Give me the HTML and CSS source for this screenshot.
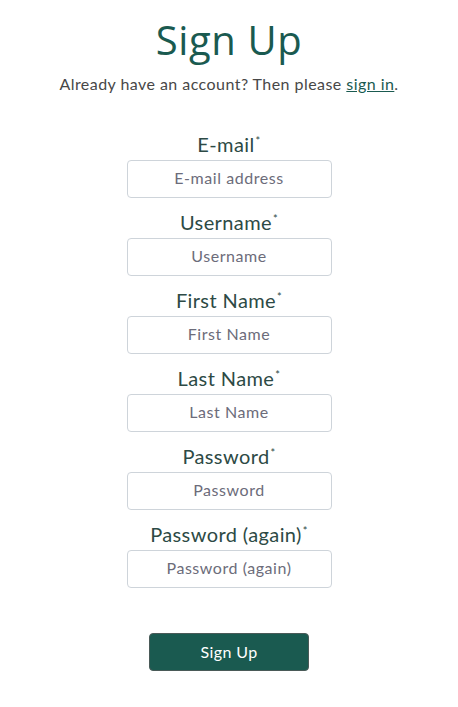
FILE: index.html
```html
<!DOCTYPE html>
<html>
<head>
<meta charset="utf-8">
<link rel="stylesheet" href="styles.css">
</head>
<body>
<main class="page">
  <h1 class="title">Sign Up</h1>
  <p class="sub">Already have an account? Then please <a href="#" class="link">sign in</a>.</p>
  <form class="form">
    <div class="field">
      <label class="label">E-mail<sup class="req">*</sup></label>
      <input class="input" type="email" placeholder="E-mail address">
    </div>
    <div class="field">
      <label class="label">Username<sup class="req">*</sup></label>
      <input class="input" type="text" placeholder="Username">
    </div>
    <div class="field">
      <label class="label">First Name<sup class="req">*</sup></label>
      <input class="input" type="text" placeholder="First Name">
    </div>
    <div class="field">
      <label class="label">Last Name<sup class="req">*</sup></label>
      <input class="input" type="text" placeholder="Last Name">
    </div>
    <div class="field">
      <label class="label">Password<sup class="req">*</sup></label>
      <input class="input" type="password" placeholder="Password">
    </div>
    <div class="field">
      <label class="label">Password (again)<sup class="req">*</sup></label>
      <input class="input" type="password" placeholder="Password (again)">
    </div>
    <button class="btn" type="button">Sign Up</button>
  </form>
</main>
</body>
</html>
```
FILE: styles.css
```css
html, body {
  margin: 0;
  padding: 0;
  background: #fff;
}
body {
  font-family: Lato, "Open Sans", sans-serif;
}
.page {
  display: flex;
  flex-direction: column;
  align-items: center;
  padding-top: 15px;
}
.title {
  margin: 0;
  font-family: "Open Sans", Lato, sans-serif;
  font-weight: 400;
  font-size: 40px;
  line-height: 50px;
  letter-spacing: 0.6px;
  color: #1a5a50;
}
.sub {
  margin: 8px 0 0;
  font-size: 16px;
  line-height: 22px;
  letter-spacing: 0.45px;
  color: #474747;
}
.link {
  color: #1a5a50;
  text-decoration: underline;
}
.form {
  margin-top: 38px;
  display: flex;
  flex-direction: column;
  align-items: center;
  gap: 13px;
}
.field {
  display: flex;
  flex-direction: column;
  align-items: center;
  gap: 5px;
}
.label {
  font-size: 20px;
  line-height: 22px;
  letter-spacing: 0.4px;
  color: #2d4a45;
}
.req {
  font-size: 11px;
  line-height: 0;
  vertical-align: 7px;
  margin-left: 1px;
}
.input {
  box-sizing: border-box;
  width: 205px;
  height: 38px;
  border: 1px solid #ced4da;
  border-radius: 4px;
  padding: 0 12px 3px;
  font-family: inherit;
  font-size: 16px;
  letter-spacing: 0.55px;
  text-align: center;
  color: #495057;
  background: #fff;
}
.input::placeholder {
  color: #6c6c7a;
}
.btn {
  margin-top: 32px;
  box-sizing: border-box;
  width: 160px;
  height: 38px;
  padding-bottom: 2px;
  background: #1a5a50;
  border: 1px solid #4a5a58;
  border-radius: 4px;
  color: #fff;
  font-family: inherit;
  font-size: 16px;
  letter-spacing: 0.4px;
}
```
